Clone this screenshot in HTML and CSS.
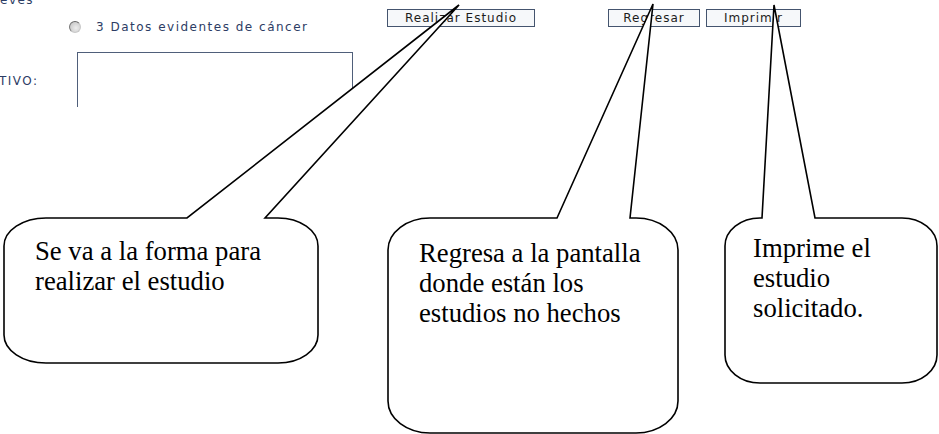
FILE: index.html
```html
<!DOCTYPE html>
<html lang="es">
<head>
    <meta charset="UTF-8">
    <meta name="viewport" content="width=device-width, initial-scale=1.0">
    <title>Estudio solicitado</title>
    <link rel="stylesheet" href="styles.css">
</head>
<body>
    <div class="form">
        <div class="label cut">eves</div>
        <div class="option">
            <span class="radio"></span>
            <span class="label">3 Datos evidentes de cáncer</span>
        </div>
        <div class="actions">
            <button class="btn btn-main">Realizar Estudio</button>
            <button class="btn btn-back">Regresar</button>
            <button class="btn btn-print">Imprimir</button>
        </div>

        <div class="label field-label">TIVO:</div>
        <textarea class="notes"></textarea>
        <div></div>
    </div>

    <div class="callouts">
        <svg width="939" height="434" viewBox="0 0 939 434">
            <path d="M46 218 L187 218 L459 5 L265 218 L278 218 A40 28 0 0 1 318 246 L318 335 A40 28 0 0 1 278 363 L46 363 A42 28 0 0 1 4 335 L4 246 A42 28 0 0 1 46 218 Z"/>
            <path d="M430 218 L557 218 L653 4 L630 218 L636 218 A42 32 0 0 1 678 250 L678 401 A42 32 0 0 1 636 433 L430 433 A42 32 0 0 1 388 401 L388 250 A42 32 0 0 1 430 218 Z"/>
            <path d="M760 218 L762 218 L774 5 L815 218 L902 218 A35 28 0 0 1 937 246 L937 355 A35 28 0 0 1 902 383 L760 383 A35 28 0 0 1 725 355 L725 246 A35 28 0 0 1 760 218 Z"/>
        </svg>
        <div class="note note-study">Se va a la forma para<br>realizar el estudio</div>
        <div class="note note-back">Regresa a la pantalla<br>donde están los<br>estudios no hechos</div>
        <div class="note note-print">Imprime el<br>estudio<br>solicitado.</div>
    </div>
</body>
</html>
```

FILE: styles.css
```css
body {
    margin: 0;
    background: #fff;
    position: relative;
    width: 939px;
    height: 434px;
    overflow: hidden;
}
.form {
    display: grid;
    grid-template-columns: 66px 321px auto;
    grid-template-rows: 52px auto;
    height: 107px;
    overflow: hidden;
    font-family: "DejaVu Sans", Verdana, sans-serif;
}
.label {
    font-size: 12px;
    line-height: 14px;
    letter-spacing: 1.5px;
    color: #2c3c64;
}
.cut {
    margin-top: -7px;
}
.option {
    display: flex;
    align-items: center;
    gap: 15px;
    margin-top: 20px;
    margin-left: 3px;
    height: 14px;
    align-self: start;
}
.radio {
    width: 10px;
    height: 10px;
    border-radius: 50%;
    background: radial-gradient(circle at 60% 60%, #eee 0, #d4d4d4 55%, #bbb 100%);
    border: 1px solid #c8c8c8;
    border-top-color: #666;
    border-left-color: #777;
}
.actions {
    display: flex;
    align-items: flex-start;
    padding-top: 9px;
}
.btn {
    height: 18px;
    padding: 0;
    font-family: "DejaVu Sans", Verdana, sans-serif;
    font-size: 12px;
    letter-spacing: 1px;
    color: #1c1c1c;
    background: #f6f8fa;
    border: 1px solid #44546e;
    border-radius: 0;
}
.btn-main {
    width: 148px;
}
.btn-back {
    width: 92px;
    margin-left: 73px;
}
.btn-print {
    width: 95px;
    margin-left: 6px;
}
.field-label {
    margin-top: 22px;
    margin-left: -1px;
}
.notes {
    width: 276px;
    height: 90px;
    margin: 0 0 0 11px;
    padding: 0;
    border: 1px solid #4f5f7a;
    background: #fff;
    resize: none;
    box-sizing: border-box;
}
.callouts {
    position: absolute;
    top: 0;
    left: 0;
    width: 939px;
    height: 434px;
}
.callouts svg {
    position: absolute;
    top: 0;
    left: 0;
}
.callouts path {
    fill: #fff;
    stroke: #000;
    stroke-width: 1.6;
    stroke-linejoin: miter;
}
.note {
    position: absolute;
    font-family: "Liberation Serif", "Times New Roman", serif;
    font-size: 26.7px;
    line-height: 30px;
    color: #000;
    white-space: nowrap;
}
.note-study {
    left: 35px;
    top: 236px;
}
.note-back {
    left: 419px;
    top: 238px;
}
.note-print {
    left: 753px;
    top: 233px;
}
```
